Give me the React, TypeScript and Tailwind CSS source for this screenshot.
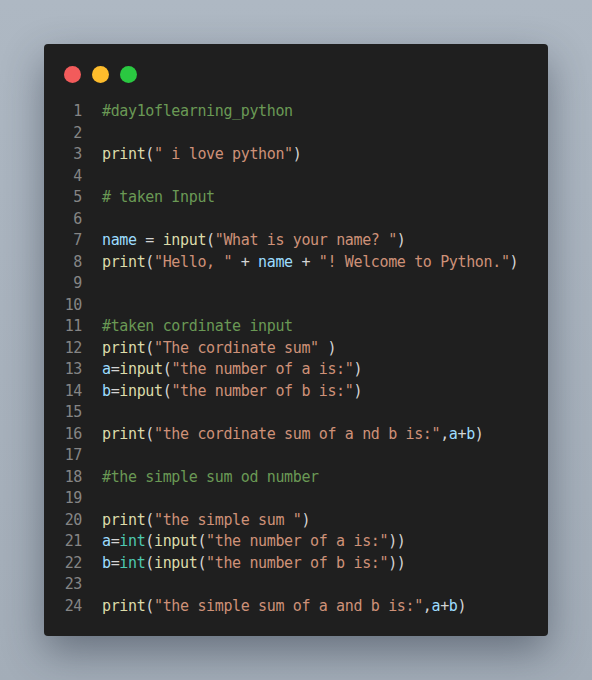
import React from "react";

type Tok = [string, string];

const C = {
  cm: "text-[#6a9955]",
  fn: "text-[#dcdcaa]",
  st: "text-[#ce9178]",
  vr: "text-[#9cdcfe]",
  ty: "text-[#4ec9b0]",
  pn: "text-[#d4d4d4]",
};

const lines: Tok[][] = [
  [[C.cm, "#day1oflearning_python"]],
  [],
  [[C.fn, "print"], [C.pn, "("], [C.st, '" i love python"'], [C.pn, ")"]],
  [],
  [[C.cm, "# taken Input"]],
  [],
  [[C.vr, "name"], [C.pn, " = "], [C.fn, "input"], [C.pn, "("], [C.st, '"What is your name? "'], [C.pn, ")"]],
  [
    [C.fn, "print"], [C.pn, "("], [C.st, '"Hello, "'], [C.pn, " + "], [C.vr, "name"], [C.pn, " + "],
    [C.st, '"! Welcome to Python."'], [C.pn, ")"],
  ],
  [],
  [],
  [[C.cm, "#taken cordinate input"]],
  [[C.fn, "print"], [C.pn, "("], [C.st, '"The cordinate sum"'], [C.pn, " )"]],
  [[C.vr, "a"], [C.pn, "="], [C.fn, "input"], [C.pn, "("], [C.st, '"the number of a is:"'], [C.pn, ")"]],
  [[C.vr, "b"], [C.pn, "="], [C.fn, "input"], [C.pn, "("], [C.st, '"the number of b is:"'], [C.pn, ")"]],
  [],
  [
    [C.fn, "print"], [C.pn, "("], [C.st, '"the cordinate sum of a nd b is:"'], [C.pn, ","], [C.vr, "a"],
    [C.pn, "+"], [C.vr, "b"], [C.pn, ")"],
  ],
  [],
  [[C.cm, "#the simple sum od number"]],
  [],
  [[C.fn, "print"], [C.pn, "("], [C.st, '"the simple sum "'], [C.pn, ")"]],
  [
    [C.vr, "a"], [C.pn, "="], [C.ty, "int"], [C.pn, "("], [C.fn, "input"], [C.pn, "("],
    [C.st, '"the number of a is:"'], [C.pn, "))"],
  ],
  [
    [C.vr, "b"], [C.pn, "="], [C.ty, "int"], [C.pn, "("], [C.fn, "input"], [C.pn, "("],
    [C.st, '"the number of b is:"'], [C.pn, "))"],
  ],
  [],
  [
    [C.fn, "print"], [C.pn, "("], [C.st, '"the simple sum of a and b is:"'], [C.pn, ","], [C.vr, "a"],
    [C.pn, "+"], [C.vr, "b"], [C.pn, ")"],
  ],
];

export default function App() {
  return (
    <div className="w-[592px] h-[680px] bg-gradient-to-b from-[#aeb8c3] to-[#a3adb8] pt-[44px] pl-[44px]">
      <div className="w-[504px] h-[592px] bg-[#1f1f1f] rounded-[4px] shadow-[0_16px_40px_rgba(30,40,55,0.45)] pt-[22px]">
        <div className="ml-[20px] flex gap-[11px]">
          <span className="w-[17px] h-[17px] rounded-full bg-[#f25b5b]" />
          <span className="w-[17px] h-[17px] rounded-full bg-[#fdbc2c]" />
          <span className="w-[17px] h-[17px] rounded-full bg-[#2ac841]" />
        </div>
        <div
          className="mt-[18px] text-[15px] tracking-[-0.36px] leading-[21.5px] whitespace-pre"
          style={{ fontFamily: '"DejaVu Sans Mono", "Liberation Mono", monospace' }}
        >
          {lines.map((toks, i) => (
            <div key={i} className="flex">
              <span className="w-[38px] text-right text-[#858585]">{i + 1}</span>
              <span className="pl-[20px]">
                {toks.map(([cls, t], j) => (
                  <span key={j} className={cls}>
                    {t}
                  </span>
                ))}
              </span>
            </div>
          ))}
        </div>
      </div>
    </div>
  );
}
